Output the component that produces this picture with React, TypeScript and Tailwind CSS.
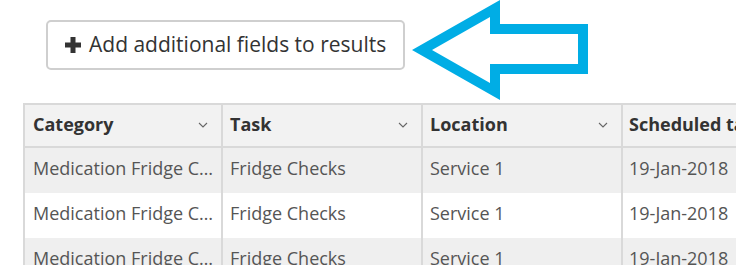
import React from "react";

const columns = [
  { label: "Category", width: "w-[198px]", pad: "pl-[8px]" },
  { label: "Task", width: "w-[200px]", pad: "pl-[7px]" },
  { label: "Location", width: "w-[200px]", pad: "pl-[7px]" },
  { label: "Scheduled task date", width: "w-[200px]", pad: "pl-[6px]" },
];

const rows = [
  ["Medication Fridge Checks", "Fridge Checks", "Service 1", "19-Jan-2018"],
  ["Medication Fridge Checks", "Fridge Checks", "Service 1", "19-Jan-2018"],
  ["Medication Fridge Checks", "Fridge Checks", "Service 1", "19-Jan-2018"],
];

const Chevron = () => (
  <svg width="10" height="6" viewBox="0 0 10 6" className="shrink-0">
    <path d="M1 1 L5 5 L9 1" fill="none" stroke="#666" strokeWidth="1.1" />
  </svg>
);

const Arrow = () => (
  <svg width="180" height="101" viewBox="0 0 180 101" className="shrink-0">
    <path
      fillRule="evenodd"
      fill="#00ADE5"
      d="M0 50 L88 0 L88 24 L176 24 L176 74 L88 74 L88 100 Z M20 50 L78 17 L78 34 L166 34 L166 64 L78 64 L78 83 Z"
    />
  </svg>
);

export default function App() {
  return (
    <div
      className="w-[736px] h-[265px] overflow-hidden bg-white"
      style={{ fontFamily: '"Open Sans", "Liberation Sans", sans-serif' }}
    >
      <div className="flex items-start h-[103px]">
        <button className="ml-[46px] mt-[20px] h-[50px] w-[359px] flex items-center gap-[8px] pl-[17px] pb-[1px] border-2 border-[#cfcfcf] rounded-[5px] bg-white text-[21px] text-[#333] whitespace-nowrap">
          <svg width="16" height="16" viewBox="0 0 16 16" className="shrink-0">
            <path d="M5.5 0 H10.5 V5.5 H16 V10.5 H10.5 V16 H5.5 V10.5 H0 V5.5 H5.5 Z" fill="#333" />
          </svg>
          <span>Add additional fields to results</span>
        </button>
        <div className="ml-[7px]">
          <Arrow />
        </div>
      </div>
      <div className="ml-[23px] w-[900px] border-l-2 border-t-2 border-[#d9d9d9]">
        <div className="flex h-[43px] bg-[#f2f2f2] border-b-2 border-[#d9d9d9]">
          {columns.map((c) => (
            <div
              key={c.label}
              className={`${c.width} ${c.pad} shrink-0 flex items-center justify-between pr-[13px] pb-[2px] border-r-2 border-[#d9d9d9] text-[18px] font-bold text-[#333] whitespace-nowrap overflow-hidden`}
            >
              <span>{c.label}</span>
              <Chevron />
            </div>
          ))}
        </div>
        {rows.map((r, i) => (
          <div
            key={i}
            className={`flex h-[45px] ${i % 2 === 0 ? "bg-[#efefef]" : "bg-white"}`}
          >
            {r.map((cell, j) => (
              <div
                key={j}
                className={`${columns[j].width} ${columns[j].pad} shrink-0 flex items-center pr-[4px] pb-[5px] border-r-2 border-[#d9d9d9] text-[18px] text-[#555] whitespace-nowrap overflow-hidden`}
              >
                <span className="truncate">{cell}</span>
              </div>
            ))}
          </div>
        ))}
      </div>
    </div>
  );
}
